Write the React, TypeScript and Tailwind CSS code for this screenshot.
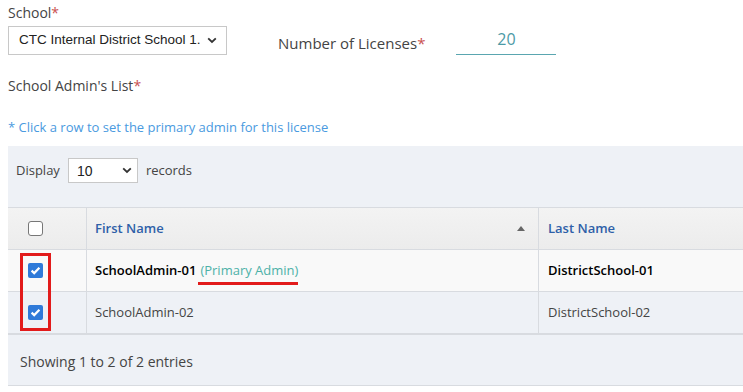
import React from 'react';

const Chevron: React.FC = () => (
  <svg width="10" height="7" viewBox="0 0 10 7" className="shrink-0">
    <path d="M1.2 1.3 L5 5 L8.8 1.3" fill="none" stroke="#333" strokeWidth="1.8" />
  </svg>
);

const Check: React.FC<{ checked?: boolean }> = ({ checked }) =>
  checked ? (
    <div className="w-[15px] h-[15px] rounded-[2px] bg-[#2f7ad9] flex items-center justify-center">
      <svg width="11" height="9" viewBox="0 0 11 9">
        <path d="M1.6 4.6 L4.2 7.1 L9.4 1.7" fill="none" stroke="white" strokeWidth="2.2" />
      </svg>
    </div>
  ) : (
    <div className="w-[15px] h-[15px] rounded-[3px] border border-[#777] bg-white" />
  );

const Required = () => <span className="text-[#c9504f]">*</span>;

const rows = [
  { first: 'SchoolAdmin-01', last: 'DistrictSchool-01', primary: true },
  { first: 'SchoolAdmin-02', last: 'DistrictSchool-02', primary: false },
];

export default function App() {
  return (
    <div className="w-[743px] h-[392px] overflow-hidden bg-white text-[#444] font-['Open_Sans',sans-serif]">
      <div className="pl-2 pt-[3px]">
        {/* School + licenses */}
        <div className="text-[14px] leading-[20px]">
          School<Required />
        </div>
        <div className="flex items-center mt-[3px]">
          <div className="w-[219px] h-[29px] border border-[#c8c8c8] flex items-center justify-between pl-[10px] pr-[9px] font-['Liberation_Sans',sans-serif] text-[13.5px] text-[#222]">
            <span className="whitespace-nowrap overflow-hidden w-[185px]">CTC Internal District School 1.</span>
            <Chevron />
          </div>
          <div className="ml-[51px] mt-[6px] text-[15px] text-[#444]">
            Number of Licenses<Required />
          </div>
          <div className="ml-[31px] w-[100px] border-b-[1.5px] border-[#5aa6b0] text-center text-[16px] leading-[24px] pb-[3px] text-[#4c9aa6] mt-[1px]">
            20
          </div>
        </div>

        <div className="mt-[21px] text-[14px] leading-[20px]">
          School Admin's List<Required />
        </div>

        <div className="mt-[21px] text-[13px] leading-[20px] text-[#4a9ae0]">
          * Click a row to set the primary admin for this license
        </div>

        {/* Table panel */}
        <div className="mt-[9px] w-[780px] bg-[#eef1f6] text-[13px]">
          <div className="h-[61px] flex items-start pl-2 pt-[12px]">
            <div className="flex items-center">
              <span className="text-[#444]">Display</span>
              <div className="ml-[8px] w-[70px] h-[25px] bg-white border border-[#c8c8c8] flex items-center justify-between pl-[8px] pr-[5px] font-['Liberation_Sans',sans-serif] text-[14px] text-[#222]">
                <span className="mt-[2px]">10</span>
                <Chevron />
              </div>
              <span className="ml-[8px]">records</span>
            </div>
          </div>

          <div className="border-t border-[#d8dbe0]">
            <div className="flex h-[42px] bg-gradient-to-b from-[#f3f3f3] to-[#ececec] border-b border-[#d8dbe0]">
              <div className="w-[79px] border-r border-[#d8dbe0] flex items-center pl-[20px]">
                <Check />
              </div>
              <div className="w-[452px] border-r border-[#d8dbe0] flex items-center justify-between pl-2 pr-[13px] font-semibold text-[#2e5fa8]">
                <span>First Name</span>
                <svg width="8" height="5" viewBox="0 0 8 5">
                  <path d="M0 5 L4 0 L8 5 Z" fill="#666" />
                </svg>
              </div>
              <div className="flex-1 flex items-center pl-[9px] font-semibold text-[#2e5fa8]">Last Name</div>
            </div>

            {rows.map((r, i) => (
              <div
                key={r.first}
                className={`relative flex h-[42px] border-b border-[#d8dbe0] ${i === 0 ? 'bg-[#f9f9f9]' : 'bg-[#eef1f6]'}`}
              >
                <div className="w-[79px] border-r border-[#d8dbe0] flex items-center pl-[20px]">
                  <Check checked />
                </div>
                <div className="w-[452px] border-r border-[#d8dbe0] flex items-center pl-2">
                  {r.primary ? (
                    <>
                      <span className="font-semibold text-black">{r.first}</span>
                      <span className="relative ml-[4px] text-[#4db1a8]">
                        (Primary Admin)
                        <span className="absolute left-[-2px] right-[0px] top-[21px] h-[3px] bg-[#e21b1b]" />
                      </span>
                    </>
                  ) : (
                    <span className="text-[#444]">{r.first}</span>
                  )}
                </div>
                <div className={`flex-1 flex items-center pl-[9px] ${r.primary ? 'font-semibold text-black' : 'text-[#444]'}`}>
                  {r.last}
                </div>
                {i === 0 && (
                  <div className="absolute left-[12px] top-[3px] w-[31px] h-[78px] border-[3px] border-[#e21b1b] z-10" />
                )}
              </div>
            ))}

            <div className="h-[52px] border-t border-[#d8dbe0] border-b flex items-center pl-[12px] pt-[2px] text-[14px] text-[#444]">
              Showing 1 to 2 of 2 entries
            </div>
          </div>
        </div>
      </div>
    </div>
  );
}
